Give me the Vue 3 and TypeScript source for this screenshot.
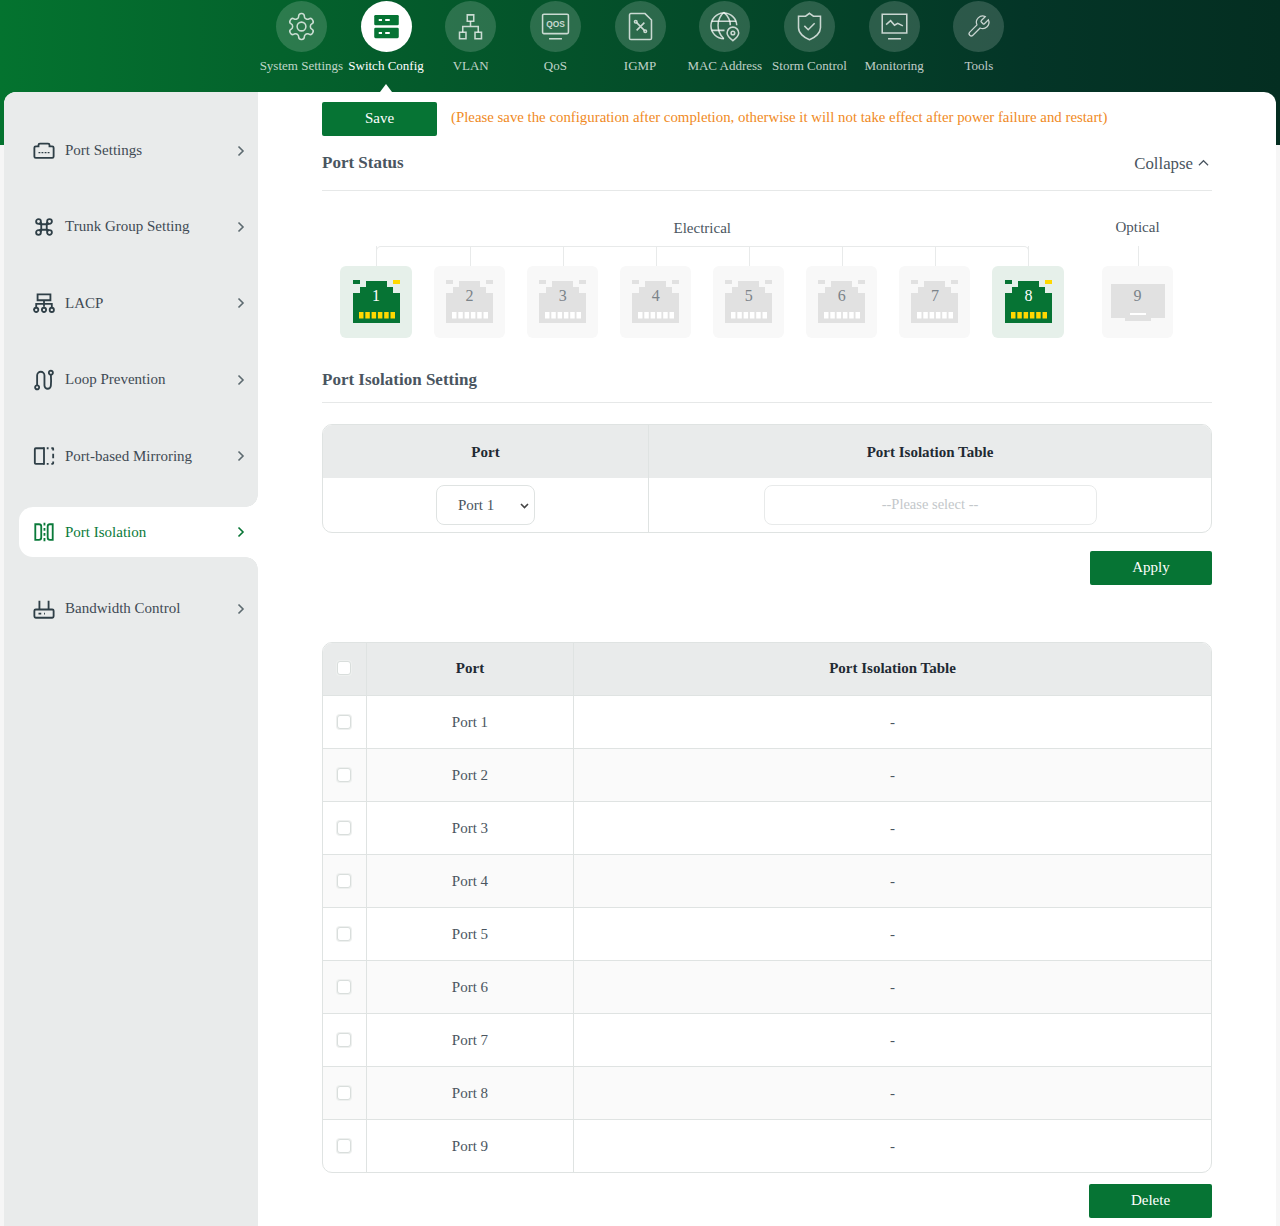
<script setup lang="ts">
// Switch web admin: Port Isolation page
import { ref } from "vue";

// circle as path data, so every icon is just a list of paths
const c = (x: number, y: number, r: number) =>
  `M${x - r} ${y}a${r} ${r} 0 1 0 ${2 * r} 0a${r} ${r} 0 1 0 ${-2 * r} 0`;

const navItems: { label: string; icon: string[]; active?: boolean; qos?: boolean; small?: boolean }[] = [
  {
    label: "System Settings",
    icon: [
      "M12.22 2h-.44a2 2 0 0 0-2 2v.18a2 2 0 0 1-1 1.73l-.43.25a2 2 0 0 1-2 0l-.15-.08a2 2 0 0 0-2.73.73l-.22.38a2 2 0 0 0 .73 2.73l.15.1a2 2 0 0 1 1 1.72v.51a2 2 0 0 1-1 1.74l-.15.09a2 2 0 0 0-.73 2.73l.22.38a2 2 0 0 0 2.73.73l.15-.08a2 2 0 0 1 2 0l.43.25a2 2 0 0 1 1 1.73V20a2 2 0 0 0 2 2h.44a2 2 0 0 0 2-2v-.18a2 2 0 0 1 1-1.73l.43-.25a2 2 0 0 1 2 0l.15.08a2 2 0 0 0 2.73-.73l.22-.39a2 2 0 0 0-.73-2.73l-.15-.08a2 2 0 0 1-1-1.74v-.5a2 2 0 0 1 1-1.74l.15-.09a2 2 0 0 0 .73-2.73l-.22-.38a2 2 0 0 0-2.73-.73l-.15.08a2 2 0 0 1-2 0l-.43-.25a2 2 0 0 1-1-1.73V4a2 2 0 0 0-2-2z",
      c(12, 12, 3.4),
    ],
  },
  { label: "Switch Config", icon: [], active: true },
  {
    label: "VLAN",
    icon: [
      "M9.5 3h5v5h-5z",
      "M3.5 16.5h5v5h-5z",
      "M15.5 16.5h5v5h-5z",
      "M12 8v4M6 16.5V12h12v4.5",
    ],
  },
  {
    label: "QoS",
    qos: true,
    icon: ["M3 2.5h18a1 1 0 0 1 1 1v13a1 1 0 0 1-1 1H3a1 1 0 0 1-1-1v-13a1 1 0 0 1 1-1z", "M7 21.5h10"],
  },
  {
    label: "IGMP",
    icon: [
      "M4.5 2h11l5 5v14a1 1 0 0 1-1 1h-15a1 1 0 0 1-1-1V3a1 1 0 0 1 1-1z",
      "M9 9l6 6M15 9l-6 6",
      c(8.3, 8.3, 1),
      c(15.7, 15.7, 1),
    ],
  },
  {
    label: "MAC Address",
    icon: [
      "M21.5 11a10 10 0 1 0-10 10.5",
      "M2 8h19M2 15h10",
      "M11.5 1c-6 5.5-6 15 0 20.5M11.5 1c3.5 3 5 7 5 10",
      "M18.5 23c-2.5-2-4.5-4-4.5-6a4.5 4.5 0 0 1 9 0c0 2-2 4-4.5 6z",
      c(18.5, 17, 1.4),
    ],
  },
  {
    label: "Storm Control",
    icon: [
      "M12 1.8l3 2.2h5.5v9c0 4-4 7.5-8.5 9.2C7.5 20.5 3.5 17 3.5 13V4H9z",
      "M8 11.5l3 3 5-5",
    ],
  },
  {
    label: "Monitoring",
    icon: [
      "M2.5 2.5h19v14.5h-19z",
      "M5.5 10.5l3.5-3 3 3.5 2.5-1.5 4 2",
      "M7 21.5h10",
    ],
  },
  {
    label: "Tools",
    small: true,
    icon: [
      "M14.7 6.3a1 1 0 0 0 0 1.4l1.6 1.6a1 1 0 0 0 1.4 0l3.77-3.77a6 6 0 0 1-7.94 7.94l-6.91 6.91a2.12 2.12 0 0 1-3-3l6.91-6.91a6 6 0 0 1 7.94-7.94l-3.76 3.76z",
    ],
  },
];

const sideItems: { label: string; icon: string[]; active?: boolean }[] = [
  {
    label: "Port Settings",
    icon: [
      "M3 7h3V5.5A1.5 1.5 0 0 1 7.500 4h9A1.5 1.5 0 0 1 18 5.5V7h3a1.5 1.5 0 0 1 1.5 1.5V18a1.5 1.5 0 0 1-1.5 1.5H3A1.5 1.5 0 0 1 1.5 18V8.500A1.5 1.5 0 0 1 3 7z",
      "M7 13v1.5M10.300 13v1.5M13.700 13v1.5M17 13v1.5",
    ],
  },
  {
    label: "Trunk Group Setting",
    icon: [
      c(6, 6, 2.6),
      c(18, 6, 2.6),
      c(6, 18, 2.6),
      c(18, 18, 2.6),
      "M8.5 7c1 1 .5 2 .5 3v4c0 1 .5 2-.5 3M15.5 7c-1 1-.5 2-.5 3v4c0 1 .5 2 .5 3",
      "M7 8.5c1 1 2 .5 3 .5h4c1 0 2 .5 3-.5M7 15.5c1-1 2-.5 3-.5h4c1 0 2-.5 3 .5",
    ],
  },
  {
    label: "LACP",
    icon: [
      "M5 2.5h14V9H5z",
      "M12 9v7M3.5 16.5V13h17v3.5",
      c(3.5, 19.5, 2.3),
      c(12, 19.5, 2.3),
      c(20.5, 19.5, 2.3),
    ],
  },
  {
    label: "Loop Prevention",
    icon: [
      c(4.5, 20, 2.2),
      c(19.5, 4, 2.2),
      "M4.5 17.8V7a4 4 0 0 1 8 0v11a3.5 3.5 0 0 0 7 0c.3-3 .3-7 0-11.7",
    ],
  },
  {
    label: "Port-based Mirroring",
    icon: [
      "M12 2.5v19",
      "M12 3.5H3a1 1 0 0 0-1 1v15a1 1 0 0 0 1 1h9",
      "M15 3.5h2M20 3.5h1.5a.5.5 0 0 1 .5.5v2M22 9.5v5M22 18v2a.5.5 0 0 1-.5.5H20M17 20.5h-2",
    ],
  },
  {
    label: "Port Isolation",
    active: true,
    icon: [
      "M2.5 3.5h4A2.5 2.5 0 0 1 9 6v12a2.5 2.5 0 0 1-2.5 2.5h-4z",
      "M21.5 3.5h-3A2.5 2.5 0 0 0 16 6v12a2.5 2.5 0 0 0 2.500 2.5h3z",
      "M12.5 2v3M12.5 7.5v3M12.5 13v3M12.5 18.5V22",
    ],
  },
  {
    label: "Bandwidth Control",
    icon: [
      "M3 12.5h18a1.5 1.5 0 0 1 1.5 1.5v6a1.5 1.5 0 0 1-1.5 1.5H3A1.5 1.5 0 0 1 1.5 20v-6A1.5 1.5 0 0 1 3 12.5z",
      "M7 12.5V3M17 12.5V3",
      "M6 17h3M12 17h1",
    ],
  },
];

const electrical = [1, 2, 3, 4, 5, 6, 7, 8];
const upPorts = [1, 8];
const pins = [0, 1, 2, 3, 4, 5];
const tableRows = [1, 2, 3, 4, 5, 6, 7, 8, 9];
const selectedPort = ref("Port 1");
</script>

<template>
  <div class="page">
    <header class="topbar">
      <nav class="nav">
        <div v-for="item in navItems" :key="item.label" class="nav-item" :class="{ active: item.active }">
          <span class="nav-circle">
            <svg v-if="item.active" class="nav-icon" viewBox="0 0 24 24">
              <rect x="2.5" y="3" width="19" height="8" rx="1" fill="#067434" />
              <rect x="2.5" y="13" width="19" height="8" rx="1" fill="#067434" />
              <path d="M6 7h2.5M11 7h3.5M6 17h2.5M11 17h3.5" stroke="#fff" stroke-width="1.5" fill="none" />
            </svg>
            <svg v-else class="nav-icon" :class="{ small: item.small }" viewBox="0 0 24 24" fill="none" stroke="currentColor" stroke-width="1.2">
              <path v-for="d in item.icon" :key="d" :d="d" />
              <text v-if="item.qos" x="12" y="12.3" class="qos-text" text-anchor="middle">QOS</text>
            </svg>
          </span>
          <span class="nav-label">{{ item.label }}</span>
        </div>
      </nav>
    </header>

    <div class="shell">
      <aside class="sidebar">
        <div v-for="item in sideItems" :key="item.label" class="side-item" :class="{ active: item.active }">
          <svg class="side-icon" viewBox="0 0 24 24" fill="none" stroke="currentColor" stroke-width="2">
            <path v-for="d in item.icon" :key="d" :d="d" />
          </svg>
          <span class="side-label">{{ item.label }}</span>
          <svg class="side-arrow" viewBox="0 0 10 12" fill="none" stroke="currentColor" stroke-width="1.6">
            <path d="M2.5 1.5L7 6l-4.5 4.5" />
          </svg>
        </div>
      </aside>

      <main class="content">
        <div class="save-row">
          <button class="btn save-btn" type="button">Save</button>
          <span class="save-tip">(Please save the configuration after completion, otherwise it will not take effect after power failure and restart)</span>
        </div>

        <div class="section-head status-head">
          <h2>Port Status</h2>
          <span class="collapse">
            Collapse
            <svg viewBox="0 0 12 8" fill="none" stroke="currentColor" stroke-width="1.3"><path d="M1 6.5l5-5 5 5" /></svg>
          </span>
        </div>

        <div class="port-panel">
          <div class="port-group electrical">
            <div class="group-title">Electrical</div>
            <div class="port-row">
              <div v-for="n in electrical" :key="n" class="port" :class="{ up: upPorts.includes(n) }">
                <svg class="rj45" viewBox="0 0 47 43">
                  <path class="rj-body" d="M13 1h21v6h6v6h7v30H0V13h7V7h6z" />
                  <rect class="rj-led-l" x="0" y="0" width="7" height="4" />
                  <rect class="rj-led-r" x="40" y="0" width="7" height="4" />
                  <rect v-for="p in pins" :key="p" class="rj-pin" :x="6 + p * 6.3" y="32" width="4.5" height="6.5" />
                </svg>
                <span class="port-no">{{ n }}</span>
              </div>
            </div>
          </div>
          <div class="port-group optical">
            <div class="group-title">Optical</div>
            <div class="port">
              <svg class="sfp" viewBox="0 0 54 37">
                <path class="rj-body" d="M0 0h54v34H40v3H14v-3H0z" />
                <rect x="19" y="29" width="16" height="2" fill="#fff" />
              </svg>
              <span class="port-no sfp-no">9</span>
            </div>
          </div>
        </div>

        <div class="section-head iso-head">
          <h2>Port Isolation Setting</h2>
        </div>

        <div class="table-wrap form-table">
          <table>
            <colgroup>
              <col class="form-col" />
              <col />
            </colgroup>
            <thead>
              <tr>
                <th>Port</th>
                <th>Port Isolation Table</th>
              </tr>
            </thead>
            <tbody>
              <tr>
                <td>
                  <select v-model="selectedPort" class="port-select">
                    <option v-for="n in tableRows" :key="n">Port {{ n }}</option>
                  </select>
                </td>
                <td>
                  <input class="iso-input" placeholder="--Please select --" readonly />
                </td>
              </tr>
            </tbody>
          </table>
        </div>

        <div class="action-row apply-row">
          <button class="btn apply-btn" type="button">Apply</button>
        </div>

        <div class="table-wrap list-table">
          <table>
            <colgroup>
              <col class="check-col" />
              <col class="port-col" />
              <col />
            </colgroup>
            <thead>
              <tr>
                <th><input type="checkbox" class="check" /></th>
                <th>Port</th>
                <th>Port Isolation Table</th>
              </tr>
            </thead>
            <tbody>
              <tr v-for="n in tableRows" :key="n">
                <td><input type="checkbox" class="check" /></td>
                <td>Port {{ n }}</td>
                <td>-</td>
              </tr>
            </tbody>
          </table>
        </div>

        <div class="action-row delete-row">
          <button class="btn delete-btn" type="button">Delete</button>
        </div>
      </main>
    </div>
  </div>
</template>

<style>
html,
body {
  margin: 0;
  background: #f6f6f6;
}
</style>

<style scoped>
.page {
  position: relative;
  height: 1226px;
  overflow: hidden;
  font-family: "Liberation Serif", "Times New Roman", serif;
  color: #4a5560;
}

/* top navigation */
.topbar {
  height: 145px;
  background: linear-gradient(90deg, #04732f 0%, #04622c 22%, #044a29 55%, #043527 80%, #042e21 100%);
}

.nav {
  display: grid;
  grid-template-columns: repeat(9, 84.7px);
  padding: 1px 0 0 259px;
}

.nav-item {
  position: relative;
  display: flex;
  flex-direction: column;
  align-items: center;
  height: 91px;
  color: rgba(255, 255, 255, 0.75);
}

.nav-item.active {
  color: #fff;
}

.nav-item.active::after {
  content: "";
  position: absolute;
  bottom: 0;
  left: 50%;
  margin-left: -6px;
  border-left: 6px solid transparent;
  border-right: 6px solid transparent;
  border-bottom: 8px solid #fff;
}

.nav-circle {
  display: flex;
  align-items: center;
  justify-content: center;
  width: 51px;
  height: 51px;
  border-radius: 50%;
  background: rgba(255, 255, 255, 0.16);
}

.nav-item.active .nav-circle {
  background: #fff;
}

.nav-icon {
  width: 31px;
  height: 31px;
}

.nav-icon.small {
  width: 25px;
  height: 25px;
}

.qos-text {
  font-family: "Liberation Sans", Arial, sans-serif;
  font-size: 6.5px;
  font-weight: 700;
  fill: currentColor;
  stroke: none;
}

.nav-label {
  margin-top: 6px;
  font-size: 13px;
  line-height: 16px;
  white-space: nowrap;
}

/* body card sits over the header */
.shell {
  display: flex;
  height: 1134px;
  margin: -53px 4px 0;
  border-radius: 12px 12px 0 0;
  overflow: hidden;
  background: #fff;
}

.sidebar {
  flex: none;
  width: 254px;
  box-sizing: border-box;
  padding-top: 33px;
  background: #e9ebeb;
}

.side-item {
  position: relative;
  display: flex;
  align-items: center;
  height: 50px;
  margin: 0 0 26.4px 15px;
  padding: 0 12px 0 14px;
  color: #2f3f47;
  font-size: 15px;
  top: 0.5px;
}

.side-item.active {
  background: #fff;
  border-radius: 14px 0 0 14px;
  color: #0a7a3a;
}

.side-item.active::before,
.side-item.active::after {
  content: "";
  position: absolute;
  right: 0;
  width: 12px;
  height: 12px;
}

.side-item.active::before {
  top: -12px;
  background: radial-gradient(circle at 0 0, #e9ebeb 11.5px, #fff 12px);
}

.side-item.active::after {
  bottom: -12px;
  background: radial-gradient(circle at 0 100%, #e9ebeb 11.5px, #fff 12px);
}

.side-icon {
  flex: none;
  width: 22px;
  height: 22px;
  margin-right: 10px;
}

.side-label {
  flex: 1;
  color: #3f4a54;
  white-space: nowrap;
}

.side-item.active .side-label {
  color: #0a7a3a;
}

.side-arrow {
  flex: none;
  width: 10px;
  height: 12px;
  color: #5d6a70;
}

.side-item.active .side-arrow {
  color: #067434;
}

/* main content */
.content {
  flex: 1;
  box-sizing: border-box;
  padding: 10px 64px 0;
  min-width: 0;
}

.btn {
  display: block;
  height: 34px;
  padding: 0 0 2px;
  border: 0;
  border-radius: 2px;
  background: #067434;
  color: #fff;
  font-family: inherit;
  font-size: 15px;
  cursor: pointer;
}

.save-row {
  display: flex;
  align-items: center;
  height: 34px;
}

.save-btn {
  width: 115px;
}

.save-tip {
  margin-left: 14px;
  margin-top: -3px;
  color: #f08a24;
  font-size: 14.83px;
  white-space: nowrap;
}

.section-head {
  display: flex;
  align-items: center;
  justify-content: space-between;
  box-sizing: border-box;
  border-bottom: 1px solid #e6e8e8;
}

.section-head h2 {
  margin: 0;
  font-size: 17px;
  font-weight: 700;
  color: #4a5560;
}

.status-head {
  height: 55px;
}

.collapse {
  display: flex;
  align-items: center;
  gap: 5px;
  margin-top: 2px;
  padding-right: 3px;
  font-size: 16.8px;
  color: #4a5560;
}

.collapse svg {
  width: 11px;
  height: 8px;
  margin-top: -3px;
}

/* port diagram */
.port-panel {
  display: flex;
  height: 147px;
  padding-left: 18px;
}

.port-group {
  flex: none;
}

.electrical {
  width: 724.5px;
}

.optical {
  width: 71px;
  margin-left: 37.5px;
}

.group-title {
  height: 55px;
  padding-top: 29px;
  box-sizing: border-box;
  margin-bottom: 20px;
  text-align: center;
  font-size: 15px;
  line-height: 17px;
  white-space: nowrap;
}

.optical .group-title {
  padding-top: 28px;
}

.port-row {
  position: relative;
  display: flex;
  justify-content: space-between;
}

/* bracket joining all electrical ports */
.port-row::before {
  content: "";
  position: absolute;
  top: -20px;
  left: 36px;
  right: 36px;
  height: 20px;
  box-sizing: border-box;
  border: 1px solid #e8eaea;
  border-bottom: 0;
  border-radius: 5px 5px 0 0;
}

.port {
  position: relative;
  display: flex;
  align-items: flex-start;
  justify-content: center;
  width: 71px;
  height: 72px;
  border-radius: 6px;
  background: #f8f8f8;
}

.port::before {
  content: "";
  position: absolute;
  top: -20px;
  left: 50%;
  width: 1px;
  height: 20px;
  background: #e8eaea;
}

.port.up {
  width: 72px;
  background: #e6f0ea;
}

.rj45 {
  width: 47px;
  height: 43px;
  margin-top: 14px;
}

.rj-body,
.rj-led-l,
.rj-led-r {
  fill: #e1e1e1;
}

.rj-pin {
  fill: #fff;
}

.port.up .rj-body,
.port.up .rj-led-l {
  fill: #067434;
}

.port.up .rj-led-r,
.port.up .rj-pin {
  fill: #ffd800;
}

.sfp {
  width: 54px;
  height: 37px;
  margin-top: 18px;
}

.port-no {
  position: absolute;
  top: 20px;
  left: 0;
  right: 0;
  text-align: center;
  font-size: 16px;
  line-height: 20px;
  color: #7b8389;
}

.port.up .port-no {
  color: #fff;
}

.iso-head {
  height: 65px;
  padding-top: 19px;
  margin-bottom: 21px;
}

/* tables */
.table-wrap {
  box-sizing: border-box;
  border: 1px solid #dfe3e2;
  border-radius: 10px;
  overflow: hidden;
}

.table-wrap table {
  width: 100%;
  table-layout: fixed;
  border-collapse: separate;
  border-spacing: 0;
  font-size: 15px;
}

th {
  box-sizing: border-box;
  background: #e9ebeb;
  color: #1f2a33;
  font-size: 15px;
  font-weight: 700;
  text-align: center;
  padding: 0;
  border-right: 1px solid #dfe3e2;
}

td {
  box-sizing: border-box;
  text-align: center;
  padding: 0;
  color: #4a5560;
  border-right: 1px solid #dfe3e2;
}

th:last-child,
td:last-child {
  border-right: 0;
}

.form-col {
  width: 326px;
}

.form-table th {
  height: 53px;
  padding-top: 1px;
}

.form-table td {
  height: 54px;
  padding-bottom: 1px;
}

.port-select {
  width: 99px;
  height: 40px;
  box-sizing: border-box;
  padding: 0 0 0 21px;
  border: 1px solid #dfe3e2;
  border-radius: 8px;
  appearance: none;
  background: #fff url("data:image/svg+xml,%3Csvg xmlns='http://www.w3.org/2000/svg' width='9' height='6' fill='none' stroke='%23444' stroke-width='1.6'%3E%3Cpath d='M1 1l3.500 3.500L8 1'/%3E%3C/svg%3E") no-repeat 83px 17px;
  color: #4a5560;
  font-family: inherit;
  font-size: 15px;
  outline: none;
}

.iso-input {
  display: block;
  width: 333px;
  height: 40px;
  box-sizing: border-box;
  margin: 0 auto;
  border: 1px solid #e8eaea;
  border-radius: 8px;
  background: #fff;
  font-family: inherit;
  font-size: 14.5px;
  text-align: center;
  outline: none;
}

.iso-input::placeholder {
  color: #c3c7ca;
}

.action-row {
  display: flex;
  justify-content: flex-end;
}

.apply-row {
  margin-top: 18px;
  margin-bottom: 57px;
}

.apply-btn {
  width: 122px;
}

.check-col {
  width: 44px;
}

.port-col {
  width: 207px;
}

.list-table th {
  height: 52px;
  padding-bottom: 2px;
}

.list-table tbody td {
  height: 53px;
  border-top: 1px solid #dfe3e2;
}

.list-table tbody tr:nth-child(even) td {
  background: #fafafa;
}

.check {
  display: block;
  width: 14px;
  height: 14px;
  margin: 0 auto;
  position: relative;
  left: -1px;
  appearance: none;
  border: 1px solid #d9dedc;
  border-radius: 3px;
  background: #fff;
  box-shadow: 0 0 0 1px #eef0ef;
}

.delete-row {
  margin-top: 11px;
}

.delete-btn {
  width: 123px;
}
</style>
